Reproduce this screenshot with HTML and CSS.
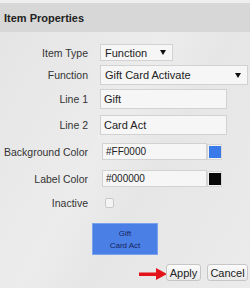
FILE: index.html
```html
<!DOCTYPE html>
<html lang="en">
<head>
    <meta charset="UTF-8">
    <meta name="viewport" content="width=device-width, initial-scale=1.0">
    <title>Item Properties</title>
    <link rel="stylesheet" href="styles.css">
</head>
<body>
    <div class="dialog">
        <div class="title-bar">
            <h1>Item Properties</h1>
        </div>
        <div class="form">
            <div class="row row-type">
                <label>Item Type</label>
                <div class="select select-short"><span>Function</span><span class="caret"></span></div>
            </div>
            <div class="row row-function">
                <label>Function</label>
                <div class="select select-long"><span>Gift Card Activate</span><span class="caret"></span></div>
            </div>
            <div class="row row-line1">
                <label for="line1">Line 1</label>
                <input type="text" id="line1" class="text-input" value="Gift">
            </div>
            <div class="row row-line2">
                <label for="line2">Line 2</label>
                <input type="text" id="line2" class="text-input" value="Card Act">
            </div>
            <div class="row row-bg">
                <label for="bg_color">Background Color</label>
                <div class="color-field">
                    <input type="text" id="bg_color" class="color-input" value="#FF0000">
                    <span class="swatch"><span class="swatch-fill swatch-blue"></span></span>
                </div>
            </div>
            <div class="row row-label">
                <label for="label_color">Label Color</label>
                <div class="color-field">
                    <input type="text" id="label_color" class="color-input" value="#000000">
                    <span class="swatch"><span class="swatch-fill swatch-black"></span></span>
                </div>
            </div>
            <div class="row row-inactive">
                <label for="inactive">Inactive</label>
                <span class="checkbox" id="inactive"></span>
            </div>
            <div class="preview">
                <span>Gift</span>
                <span>Card Act</span>
            </div>
            <div class="actions">
                <svg class="arrow" width="28" height="12" viewBox="0 0 28 12">
                    <rect x="0" y="4.5" width="19" height="3.5" fill="#e3131b"/>
                    <polygon points="17,0 28,6 17,12" fill="#e3131b"/>
                </svg>
                <button class="btn btn-apply">Apply</button>
                <button class="btn btn-cancel">Cancel</button>
            </div>
        </div>
    </div>
</body>
</html>
```

FILE: styles.css
```css
/* Reset default margin and padding */
* {
    margin: 0;
    padding: 0;
    box-sizing: border-box;
}

body {
    font-family: "Liberation Sans", Arial, sans-serif;
    background-color: #e8e8e8;
    color: #333;
    width: 250px;
    height: 288px;
    overflow: hidden;
}

.dialog {
    height: 288px;
    background: linear-gradient(120deg, #e4e4e4 0%, #ececec 45%, #e6e6e6 60%, #ebebeb 100%);
}

.title-bar {
    border-top: 3px solid #efefef;
    background-color: #d7d7d7;
    height: 32px;
    display: flex;
    align-items: center;
    padding-left: 4px;
}

h1 {
    font-size: 11px;
    font-weight: bold;
    color: #222;
}

.form {
    display: flex;
    flex-direction: column;
}

.row {
    display: grid;
    grid-template-columns: 88px auto;
    column-gap: 12px;
    align-items: center;
    justify-content: start;
}

.row label {
    text-align: right;
    font-size: 10.5px;
    white-space: nowrap;
    color: #333;
}

.row-type { margin-top: 12px; height: 17px; }
.row-function { margin-top: 4px; height: 20px; }
.row-line1 { margin-top: 4px; height: 20px; }
.row-line2 { margin-top: 6px; height: 20px; }
.row-bg { margin-top: 8px; height: 17px; }
.row-label { margin-top: 10px; height: 17px; }
.row-inactive { margin-top: 10px; height: 11px; }

.select {
    display: flex;
    justify-content: space-between;
    align-items: center;
    background-color: #f6f6f6;
    border: 1px solid #d2d2d2;
    font-size: 11px;
    color: #222;
    padding: 0 6px 0 4px;
}

.select-short { width: 73px; height: 17px; }
.select-long { width: 148px; height: 20px; }

.caret {
    width: 0;
    height: 0;
    border-left: 3px solid transparent;
    border-right: 3px solid transparent;
    border-top: 5px solid #111;
}

.text-input, .color-input {
    font-family: "Liberation Sans", Arial, sans-serif;
    font-size: 11px;
    color: #222;
    background-color: #f6f6f6;
    border: 1px solid #d2d2d2;
    padding: 0 3px;
    outline: none;
}

.text-input { width: 127px; height: 20px; }

.color-field {
    display: flex;
    align-items: center;
    margin-left: 2px;
}

.color-input {
    width: 105px;
    height: 17px;
    font-size: 10px;
}

.swatch {
    display: flex;
    align-items: center;
    justify-content: center;
    width: 15px;
    height: 16px;
    background-color: #f2f2f2;
    border: 1px solid #d6d6d6;
}

.swatch-fill {
    width: 12px;
    height: 12px;
}

.swatch-blue { background-color: #3a7ae8; }
.swatch-black { background-color: #080808; }

.checkbox {
    width: 9px;
    height: 10px;
    margin-left: 5px;
    background-color: #f4f4f4;
    border: 1px solid #c9c9c9;
    border-radius: 2px;
}

.preview {
    align-self: center;
    margin-top: 15px;
    width: 66px;
    height: 32px;
    background-color: #4a80e6;
    border: 1px solid #7aa2ec;
    display: flex;
    flex-direction: column;
    align-items: center;
    justify-content: center;
    gap: 3px;
    font-size: 8px;
    color: #16245e;
}

.actions {
    display: flex;
    justify-content: flex-end;
    align-items: center;
    gap: 6px;
    margin-top: 9px;
    padding-right: 2px;
}

.arrow {
    margin-right: -7px;
    margin-top: 2px;
}

.btn {
    font-family: "Liberation Sans", Arial, sans-serif;
    font-size: 11px;
    color: #222;
    height: 17px;
    background: linear-gradient(#fbfbfb, #e9e9e9);
    border: 1px solid #c6c6c6;
    border-radius: 3px;
}

.btn-apply { width: 35px; }
.btn-cancel { width: 41px; }
```
